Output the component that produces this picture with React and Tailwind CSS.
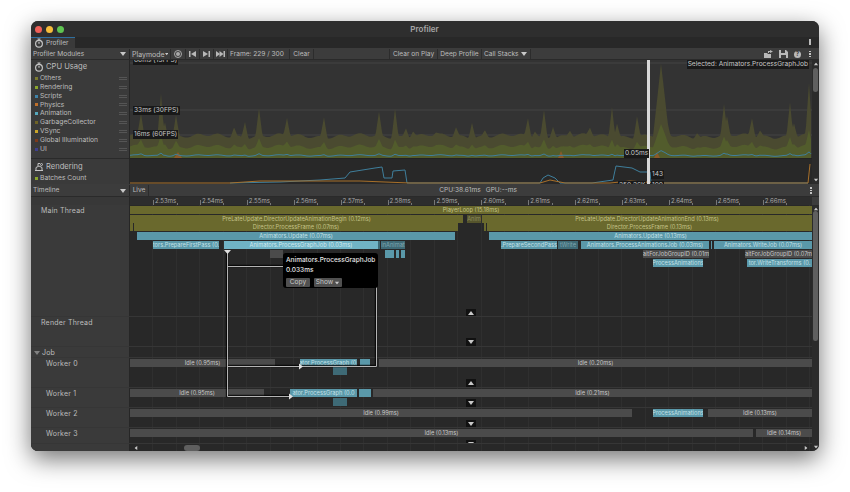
import React from "react";

// x values below are page pixels, canvas starts at 130
const CANVAS_X = 130;

const LEGEND = [
  ["Others", "#7a7a2e"],
  ["Rendering", "#8aa52c"],
  ["Scripts", "#3f83a8"],
  ["Physics", "#c0702a"],
  ["Animation", "#56a8bc"],
  ["GarbageCollector", "#6e6326"],
  ["VSync", "#c9a52a"],
  ["Global Illumination", "#7c3a1c"],
  ["UI", "#40408c"],
];

const SPIKES = [
  [141, 115], [161, 93], [165, 120], [176, 115], [234, 127], [245, 120], [259, 109], [287, 118],
  [324, 116], [379, 113], [395, 107], [406, 127], [413, 130], [436, 134], [456, 127], [472, 120],
  [485, 130], [528, 118], [535, 130], [544, 110], [553, 124], [570, 130], [590, 128], [612, 105],
  [617, 122], [637, 115], [661, 66], [667, 122], [697, 131], [724, 106], [727, 118], [752, 118],
  [760, 130], [790, 102], [794, 122], [809, 85],
];

function spikeAt(x) {
  let lift = 0;
  for (const [sx, sy] of SPIKES) {
    const d = Math.abs(x - sx);
    const half = sx === 661 ? 8 : 3.5;
    if (d < half) lift = Math.max(lift, (1 - d / half) * (136 - sy));
  }
  return lift;
}

function makeCurve(base, noise, liftRatio) {
  const pts = [];
  for (let x = 130; x <= 811; x += 1) {
    const wave = Math.sin(x * 0.31) * noise + Math.sin(x * 0.083) * noise;
    pts.push([x - CANVAS_X, base + wave - spikeAt(x) * liftRatio]);
  }
  return pts;
}

function areaPath(pts, bottom) {
  const line = pts.map(([x, y]) => `${x},${y.toFixed(1)}`).join(" ");
  return `${pts[0][0]},${bottom} ${line} ${pts[pts.length - 1][0]},${bottom}`;
}

function linePath(pts) {
  return pts.map(([x, y]) => `${x},${y.toFixed(1)}`).join(" ");
}

function CpuChart() {
  const outer = makeCurve(76, 1.4, 1);
  const inner = makeCurve(87, 1.2, 0.3);
  const scripts = makeCurve(95.5, 0.4, 0.06);
  return (
    <svg width="682" height="99" className="block">
      <line x1="0" x2="682" y1="3" y2="3" stroke="#444" />
      <line x1="0" x2="682" y1="50" y2="50" stroke="#444" />
      <line x1="0" x2="682" y1="75" y2="75" stroke="#444" />
      <polygon points={areaPath(outer, 98)} fill="#4a4a30" />
      <polygon points={areaPath(inner, 98)} fill="#525c2c" />
      <polygon points="44,98 48,92 52,98" fill="#8a5a28" />
      <polygon points="428,98 431,91 434,98" fill="#8a5a28" />
      <polygon points="524,98 527,92 530,98" fill="#8a5a28" />
      <polyline points={linePath(scripts)} fill="none" stroke="#3f7f9c" strokeWidth="1" />
      <line x1="0" x2="682" y1="98.5" y2="98.5" stroke="#222" />
    </svg>
  );
}

function RenderingChart() {
  return (
    <svg width="682" height="25" className="block">
      <polyline
        fill="none"
        stroke="#3f7f9c"
        points="100,24 150,23 190,21 215,19 220,13 245,9 252,8 254,19 262,19 263,12 275,11 277,24 410,24 413,19 418,16 425,19 430,24 462,24 483,21 484,16 486,7 502,9 510,13 520,13 521,24 678,24"
      />
      <polyline
        fill="none"
        stroke="#a8702a"
        points="0,24 100,24 130,22 230,22 280,24 410,24 420,21 435,24 480,24 500,22 530,24 678,24 680,5"
      />
    </svg>
  );
}

function Caret({ className = "" }) {
  return (
    <svg width="6" height="4" viewBox="0 0 6 4" className={className}>
      <polygon points="0,0 6,0 3,4" fill="#c8c8c8" />
    </svg>
  );
}

function StepIcon({ kind }) {
  return (
    <svg width="9" height="8" viewBox="0 0 9 8" fill="#b8b8b8">
      {kind === "first" && (
        <>
          <rect x="1" y="1" width="1.5" height="6" />
          <polygon points="8,1 8,7 3,4" />
        </>
      )}
      {kind === "next" && (
        <>
          <polygon points="1,1 1,7 6,4" />
          <rect x="6.5" y="1" width="1.5" height="6" />
        </>
      )}
      {kind === "last" && (
        <>
          <polygon points="0,1 0,7 4,4" />
          <polygon points="3.5,1 3.5,7 7.5,4" />
          <rect x="7.5" y="1" width="1.5" height="6" />
        </>
      )}
    </svg>
  );
}

function StopwatchIcon() {
  return (
    <svg width="10" height="10" viewBox="0 0 10 10" fill="none" stroke="#c4c4c4" strokeWidth="1.2">
      <circle cx="5" cy="5.8" r="3.4" />
      <path d="M3.5 1h3M5 1v1.5M5 5.8V3.8" />
    </svg>
  );
}

function RenderingIcon() {
  return (
    <svg width="10" height="10" viewBox="0 0 10 10" fill="none" stroke="#c4c4c4" strokeWidth="1">
      <path d="M1 8.5h8M2 8V5.5l3-1.5 3 1.5V8M4 4V1.5h2" />
      <circle cx="7.5" cy="2.5" r="1" />
    </svg>
  );
}

function TitleBar() {
  return (
    <div className="relative flex h-[16px] items-center bg-[#2e2e2e]">
      <div className="flex gap-[4px] pl-[4px]">
        <span className="h-[7px] w-[7px] rounded-full bg-[#ee5f58]" />
        <span className="h-[7px] w-[7px] rounded-full bg-[#f6bd3b]" />
        <span className="h-[7px] w-[7px] rounded-full bg-[#5fc551]" />
      </div>
      <span className="flex-1 pr-[34px] text-center text-[8px] font-semibold text-[#a6a6a6]">Profiler</span>
    </div>
  );
}

function TabStrip() {
  return (
    <div className="flex h-[11px] items-stretch justify-between bg-[#282828]">
      <div className="flex w-[44px] items-center gap-[2px] border-t border-[#2f6f9f] bg-[#3a3a3a] pl-[3px] text-[#bdbdbd]">
        <StopwatchIcon />
        <span>Profiler</span>
      </div>
      <span className="mr-[8px] mt-[2px] h-[6px] w-[2px] border border-[#bbb]" />
    </div>
  );
}

function ToolButton({ children, className = "" }) {
  return (
    <div className={`flex items-center whitespace-nowrap border-r border-[#2c2c2c] ${className}`}>{children}</div>
  );
}

function Toolbar() {
  return (
    <div className="flex h-[12px] items-stretch border-b border-[#2a2a2a] bg-[#3c3c3c] pt-[1px] text-[#bdbdbd]">
      <div className="flex w-[99px] items-center justify-between border-r border-[#262626] pl-[2px] pr-[3px]">
        <span>Profiler Modules</span>
        <Caret />
      </div>
      <ToolButton className="w-[41px] justify-between pl-[2px] pr-[2px]">
        <span className="text-[7px]">Playmode</span>
        <Caret />
      </ToolButton>
      <ToolButton className="w-[15px] justify-center">
        <span className="flex h-[8px] w-[8px] items-center justify-center rounded-full border border-[#aaa]">
          <span className="h-[4px] w-[4px] rounded-full bg-[#aaa]" />
        </span>
      </ToolButton>
      <ToolButton className="w-[14px] justify-center"><StepIcon kind="first" /></ToolButton>
      <ToolButton className="w-[14px] justify-center"><StepIcon kind="next" /></ToolButton>
      <ToolButton className="w-[14px] justify-center"><StepIcon kind="last" /></ToolButton>
      <ToolButton className="w-[62px] pl-[2px]">Frame: 229 / 300</ToolButton>
      <ToolButton className="w-[24px] justify-center">Clear</ToolButton>
      <div className="w-[76px] border-r border-[#2c2c2c]" />
      <ToolButton className="w-[48px] justify-center">Clear on Play</ToolButton>
      <ToolButton className="w-[44px] justify-center">Deep Profile</ToolButton>
      <ToolButton className="w-[49px] justify-between pl-[2px] pr-[3px]">
        <span>Call Stacks</span>
        <Caret />
      </ToolButton>
      <div className="flex flex-1 items-center justify-end gap-[6px] pr-[6px]">
        <svg width="9" height="8" viewBox="0 0 9 8" fill="#b8b8b8">
          <path d="M0 3h3l1 1h3v4H0zM4 3V1h2V0l3 1.5L6 3V2H5v1z" />
        </svg>
        <svg width="9" height="8" viewBox="0 0 9 8" fill="#b8b8b8">
          <path d="M0 0h7l2 2v6H0zM2 0v3h4V0zM2 5v3h5V5z" fillRule="evenodd" />
        </svg>
        <span className="flex h-[7px] w-[7px] items-center justify-center rounded-full bg-[#b8b8b8] text-[6px] font-bold text-[#3c3c3c]">?</span>
        <Kebab />
      </div>
    </div>
  );
}

function Kebab() {
  return (
    <span className="flex w-[6px] flex-col items-center gap-[1px]">
      <span className="h-[1.5px] w-[1.5px] bg-[#c4c4c4]" />
      <span className="h-[1.5px] w-[1.5px] bg-[#c4c4c4]" />
      <span className="h-[1.5px] w-[1.5px] bg-[#c4c4c4]" />
    </span>
  );
}

function ChartTag({ className, children }) {
  return (
    <span className={`absolute whitespace-nowrap bg-[#191919] px-[1px] text-[6.6px] leading-[9px] text-[#c8c8c8] ${className}`}>{children}</span>
  );
}

function Modules() {
  return (
    <div className="relative flex h-[124px] items-stretch">
      <div className="flex w-[99px] flex-col border-r border-[#262626] bg-[#3a3a3a] text-[#bdbdbd]">
        <div className="flex h-[99px] flex-col border-b border-[#2a2a2a] pl-[3px]">
          <div className="flex h-[13px] shrink-0 items-center gap-[2px] text-[7.6px]">
            <StopwatchIcon />
            <span>CPU Usage</span>
          </div>
          <div className="flex flex-col pt-[1px]">
            {LEGEND.map(([name, color]) => (
              <div key={name} className="flex h-[8.85px] items-center">
                <span className="mr-[2px] ml-[1px] h-[3px] w-[3px]" style={{ background: color }} />
                <span className="flex-1 text-[6.7px]">{name}</span>
                <span className="mr-[2px] h-[3px] w-[8px] border-y border-[#555]" />
              </div>
            ))}
          </div>
        </div>
        <div className="flex flex-1 flex-col pl-[3px]">
          <div className="flex h-[15px] items-center gap-[2px] pt-[1px] text-[7.6px]">
            <RenderingIcon />
            <span>Rendering</span>
          </div>
          <div className="flex h-[9px] items-center">
            <span className="mr-[2px] ml-[1px] h-[3px] w-[3px] bg-[#8aa52c]" />
            <span className="text-[6.7px]">Batches Count</span>
          </div>
        </div>
      </div>
      <div className="relative w-[682px] overflow-hidden bg-[#333333]">
        <div className="h-[99px]">
          <CpuChart />
        </div>
        <div className="h-[25px] bg-[#282828]">
          <RenderingChart />
        </div>
        <ChartTag className="left-[3px] top-[-4px]">66ms (15FPS)</ChartTag>
        <ChartTag className="left-[3px] top-[46px]">33ms (30FPS)</ChartTag>
        <ChartTag className="left-[3px] top-[70px]">16ms (60FPS)</ChartTag>
        <ChartTag className="right-[3px] top-[0px]">Selected: Animators.ProcessGraphJob</ChartTag>
        <span className="absolute left-[517px] top-0 h-[124px] w-[3px] bg-[#d8d8d8]" />
        <ChartTag className="left-[494px] top-[89px]">0.05ms</ChartTag>
        <ChartTag className="left-[521px] top-[110px]">143</ChartTag>
        <ChartTag className="left-[488px] top-[121px] text-[#a8a860]">250.26K</ChartTag>
        <ChartTag className="left-[521px] top-[121px]">100</ChartTag>
      </div>
      <Scrollbar thumbClass="h-[24px] mt-[2px]" />
    </div>
  );
}

function Scrollbar({ thumbClass }) {
  return (
    <div className="flex w-[7px] flex-col items-center justify-between bg-[#2b2b2b] py-[2px]">
      <div className="flex w-full flex-1 flex-col items-center">
        <Caret className="rotate-180 scale-75" />
        <span className={`w-[5px] rounded-full bg-[#5f5f5f] ${thumbClass}`} />
      </div>
      <Caret className="scale-75" />
    </div>
  );
}

function TimelineToolbar() {
  return (
    <div className="relative flex h-[13px] items-stretch border-b border-[#2a2a2a] bg-[#3c3c3c] pt-[1px] text-[#bdbdbd]">
      <div className="flex w-[99px] items-center justify-between border-r border-[#262626] pl-[2px] pr-[3px]">
        <span>Timeline</span>
        <Caret />
      </div>
      <div className="flex w-[19px] items-center justify-center border-r border-[#2c2c2c]">Live</div>
      <div className="flex w-[670px] items-center justify-end gap-[5px] pr-[302px] whitespace-nowrap">
        <span>CPU:38.61ms</span>
        <span>GPU:--ms</span>
      </div>
      <span className="absolute right-[5px] top-[3px]"><Kebab /></span>
    </div>
  );
}

const RULER = ["2.53", "2.54", "2.55", "2.56", "2.57", "2.58", "2.59", "2.60", "2.61", "2.62", "2.63", "2.64", "2.65", "2.66"];

function Ruler() {
  return (
    <div className="flex h-[8px]">
      <div className="w-[99px] border-r border-[#262626] bg-[#383838]" />
      <div className="relative w-[682px] overflow-hidden bg-[#2d2d2d] text-[6px] leading-[8px] text-[#a8a8a8]">
        {RULER.map((label, i) => (
          <React.Fragment key={label}>
            <span className="absolute bottom-0 h-[5px] w-px bg-[#777]" style={{ left: 23 + i * 46.9 }} />
            <span className="absolute bottom-0 h-[2px] w-px bg-[#777]" style={{ left: 46.5 + i * 46.9 }} />
            <span className="absolute top-0 whitespace-nowrap" style={{ left: 25 + i * 46.9 }}>{label}ms</span>
          </React.Fragment>
        ))}
      </div>
      <div className="w-[7px] bg-[#3c3c3c]" />
    </div>
  );
}

const BAR_STYLES = {
  olive: "bg-[#6a692d] text-[#c4c388]",
  oliveDim: "bg-[#55542c] text-[#8c8b5e]",
  teal: "bg-[#5a98a9] text-[#c2e0e7]",
  tealOn: "bg-[#70b3c5] text-[#d0eaef]",
  tealDim: "bg-[#3e6a76] text-[#7ea6b0]",
  gray: "bg-[#4b4b4b] text-[#c8c8c8]",
};

function Bar({ from, to, top, kind, text = "" }) {
  return (
    <div
      className={`absolute flex h-[8px] items-center justify-center overflow-hidden whitespace-nowrap text-[5.7px] leading-[8px] ${BAR_STYLES[kind]}`}
      style={{ left: from - CANVAS_X, width: to - from, top }}
    >
      {text}
    </div>
  );
}

const L = [1, 10, 18, 27, 36, 45, 54];

const MAIN_BARS = [
  [130, 812, L[0], "olive", "PlayerLoop (15.18ms)"],
  [130, 463, L[1], "olive", "PreLateUpdate.DirectorUpdateAnimationBegin (0.12ms)"],
  [467, 481, L[1], "oliveDim", "Anim"],
  [482, 812, L[1], "olive", "PreLateUpdate.DirectorUpdateAnimationEnd (0.13ms)"],
  [130, 133, L[2], "olive"],
  [134, 458, L[2], "olive", "Director.ProcessFrame (0.07ms)"],
  [484, 486, L[2], "olive"],
  [487, 812, L[2], "olive", "Director.ProcessFrame (0.13ms)"],
  [137, 455, L[3], "teal", "Animators.Update (0.07ms)"],
  [489, 812, L[3], "teal", "Animators.Update (0.13ms)"],
  [153, 219, L[4], "teal", "tors.PrepareFirstPass (0."],
  [224, 378, L[4], "tealOn", "Animators.ProcessGraphJob (0.03ms)"],
  [378, 380, L[4], "tealDim"],
  [381, 405, L[4], "tealDim", "inAnimat"],
  [501, 557, L[4], "teal", ".PrepareSecondPass"],
  [558, 578, L[4], "tealDim", "tWrite"],
  [581, 709, L[4], "teal", "Animators.ProcessAnimationsJob (0.03ms)"],
  [711, 712, L[4], "teal"],
  [714, 812, L[4], "teal", "Animators.WriteJob (0.07ms)"],
  [270, 283, L[5], "gray"],
  [385, 394, L[5], "teal"],
  [396, 399, L[5], "teal"],
  [401, 405, L[5], "teal"],
  [643, 709, L[5], "gray", "aitForJobGroupID (0.01m"],
  [745, 812, L[5], "gray", "aitForJobGroupID (0.07m"],
  [653, 703, L[6], "teal", "ProcessAnimations"],
  [747, 812, L[6], "teal", "tor.WriteTransforms (0."],
];

const WORKER0 = [
  [130, 275, 1, "gray", "Idle (0.95ms)"],
  [300, 357, 1, "teal", "ator.ProcessGraph (0."],
  [360, 370, 1, "teal"],
  [379, 812, 1, "gray", "Idle (0.20ms)"],
  [333, 347, 9, "tealDim"],
];

const WORKER1 = [
  [130, 264, 1, "gray", "Idle (0.95ms)"],
  [290, 357, 1, "teal", "ator.ProcessGraph (0.0"],
  [359, 371, 1, "teal"],
  [373, 812, 1, "gray", "Idle (0.21ms)"],
  [333, 347, 10, "tealDim"],
];

const WORKER2 = [
  [130, 632, 1, "gray", "Idle (0.99ms)"],
  [653, 703, 1, "teal", "ProcessAnimations"],
  [708, 812, 1, "gray", "Idle (0.13ms)"],
];

const WORKER3 = [
  [130, 753, 1, "gray", "Idle (0.13ms)"],
  [756, 812, 1, "gray", "Idle (0.14ms)"],
];

function Row({ label, height, pad, bars = [], children, caret }) {
  return (
    <div className="flex border-b border-[#363636]" style={{ height }}>
      <div className="flex w-[99px] items-start border-r border-[#262626] bg-[#3a3a3a] pt-[1px] text-[7px] leading-[10px] text-[#bdbdbd]" style={{ paddingLeft: pad }}>
        {caret && <Caret className="mr-[2px] mt-[3px] opacity-50" />}
        <span className="tracking-[0.2px]">{label}</span>
      </div>
      <div className="relative flex-1 overflow-hidden">
        {bars.map(([from, to, top, kind, text]) => (
          <Bar key={`${from}-${top}`} from={from} to={to} top={top} kind={kind} text={text} />
        ))}
        {children}
      </div>
    </div>
  );
}

function Fold({ up, top }) {
  return (
    <span
      className="absolute left-[336px] flex h-[8px] w-[10px] items-center justify-center bg-[#111]"
      style={{ top }}
    >
      <Caret className={up ? "rotate-180" : ""} />
    </span>
  );
}

// lines linking the selected job to its workers, tooltip above them
function FlowOverlay() {
  return (
    <>
      <svg width="682" height="239" className="absolute left-[99px] top-0 pointer-events-none">
        <g fill="none" stroke="#000" strokeWidth="2.4" opacity="0.75">
          <path d="M97 45V191H160M97 61H246V161H170M97 161H170" />
        </g>
        <g fill="none" stroke="#b4b4b4" strokeWidth="1">
          <path d="M97.5 45V191.5H160M97.5 61.5H246.5V161.5H170M97.5 161.5H170" />
        </g>
        <polygon points="94,45 101,45 97.5,49" fill="#e0e0e0" />
        <polygon points="169,158.5 173,161.5 169,164.5" fill="#e0e0e0" />
        <polygon points="159,188.5 163,191.5 159,194.5" fill="#e0e0e0" />
      </svg>
      <div className="absolute left-[252px] top-[48px] h-[35px] w-[95px] rounded-[3px] bg-black px-[3px] pt-[3px] text-[6.5px] leading-[9.5px] text-[#e8e8e8]">
        <div className="whitespace-nowrap font-medium">Animators.ProcessGraphJob</div>
        <div className="font-medium">0.033ms</div>
        <div className="mt-[3px] flex gap-[4px] text-[6.6px] leading-[9px] text-[#c8c8c8]">
          <span className="w-[24px] rounded-[1px] bg-[#505050] text-center">Copy</span>
          <span className="flex w-[28px] items-center justify-center gap-[1px] rounded-[1px] bg-[#505050]">
            Show <Caret className="scale-75" />
          </span>
        </div>
      </div>
    </>
  );
}

function Timeline() {
  return (
    <div className="relative flex flex-1">
      <div className="flex w-[781px] flex-col bg-[#282828] bg-[repeating-linear-gradient(90deg,transparent_0,transparent_22.45px,#2f2f2f_22.45px,#2f2f2f_23.45px)] bg-[position:99px_0]">
        <Row label="Main Thread" height={112} pad={10} bars={MAIN_BARS}>
          <Fold up top={104} />
        </Row>
        <Row label="Render Thread" height={30} pad={10}>
          <Fold top={21} />
        </Row>
        <Row label="Job" height={11} pad={3} caret />
        <Row label="Worker 0" height={30} pad={15} bars={WORKER0}>
          <Fold up top={21} />
        </Row>
        <Row label="Worker 1" height={20} pad={15} bars={WORKER1}>
          <Fold top={11} />
        </Row>
        <Row label="Worker 2" height={20} pad={15} bars={WORKER2}>
          <Fold top={12} />
        </Row>
        <Row label="Worker 3" height={16} pad={15} bars={WORKER3}>
          <Fold top={12} />
        </Row>
        <div className="flex h-[8px] flex-1">
          <div className="w-[99px] border-r border-[#262626] bg-[#3a3a3a]" />
          <div className="flex flex-1 items-center justify-between px-[3px]">
            <Caret className="rotate-90 scale-75" />
            <span className="ml-[45px] h-[6px] w-[16px] rounded-full bg-[#5f5f5f]" />
            <span className="flex-1" />
            <Caret className="-rotate-90 scale-75" />
          </div>
        </div>
      </div>
      <Scrollbar thumbClass="h-[130px]" />
      <FlowOverlay />
    </div>
  );
}

export default function App() {
  return (
    <div className="h-[492px] w-[850px] overflow-hidden bg-white pl-[31px] pt-[21px] font-['Inter',sans-serif] text-[6.6px] leading-none">
      <div className="flex h-[430px] w-[788px] flex-col overflow-hidden rounded-[7px] bg-[#282828] shadow-[0_8px_24px_rgba(0,0,0,0.55)]">
        <TitleBar />
        <TabStrip />
        <Toolbar />
        <Modules />
        <TimelineToolbar />
        <Ruler />
        <Timeline />
      </div>
    </div>
  );
}
